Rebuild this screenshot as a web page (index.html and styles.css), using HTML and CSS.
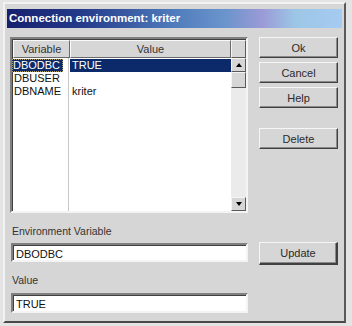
FILE: index.html
```html
<html lang="en">
<head>
    <meta charset="UTF-8">
    <title>Connection environment</title>
    <link rel="stylesheet" href="styles.css">
</head>
<body>
    <div class="dialog">

        <div class="titlebar">Connection environment: kriter</div>

        <div class="body">
            <div class="top">
                <div class="list">
                    <div class="list-main">
                        <div class="header">
                            <div class="col-var">Variable</div>
                            <div class="col-val">Value</div>
                        </div>
                        <div class="rows">
                            <div class="sep"></div>
                            <div class="row selected">
                                <div class="col-var"><span>DBODBC</span></div>
                                <div class="col-val"><span>TRUE</span></div>
                            </div>
                            <div class="row">
                                <div class="col-var">DBUSER</div>
                                <div class="col-val"></div>
                            </div>
                            <div class="row">
                                <div class="col-var">DBNAME</div>
                                <div class="col-val">kriter</div>
                            </div>
                        </div>
                    </div>
                    <div class="scrollbar">
                        <div class="corner"></div>
                        <div class="arrow up"><span></span></div>
                        <div class="thumb"></div>
                        <div class="track"></div>
                        <div class="arrow down"><span></span></div>
                    </div>
                </div>

                <div class="buttons">
                    <button>Ok</button>
                    <button>Cancel</button>
                    <button>Help</button>
                    <button class="delete">Delete</button>
                </div>
            </div>

            <div class="fields">
                <div class="label">Environment Variable</div>
                <div></div>
                <div class="input">DBODBC</div>
                <button class="default">Update</button>
                <div class="label second">Value</div>
                <div></div>
                <div class="input tall">TRUE</div>
            </div>
        </div>

    </div>
</body>
</html>
```

FILE: styles.css
```css
* {
    box-sizing: border-box;
    font-family: "Liberation Sans", Arial, sans-serif;
}

body {
    margin: 0;
    background: #e4e4e4;
}

.dialog {
    margin: 2px 6px 0 3px;
    width: 343px;
    height: 321px;
    background: #d6d6d6;
    border: 2px solid;
    border-color: #f2f2f2 #5a5a5a #4a4a4a #f2f2f2;
}

.titlebar {
    margin: 5px 2px 0 2px;
    height: 19px;
    padding: 3px 0 0 2px;
    color: white;
    font-weight: bold;
    font-size: 11.5px;
    background: linear-gradient(to right, #16206e 0%, #243a8a 22%, #4f7cbc 50%, #6a94cc 65%, #9a9ad6 76%, #9cc6e6 86%, #a6cbf2 100%);
}

.body {
    padding: 9px 6px 0 5px;
}

.top {
    display: flex;
    gap: 11px;
}

.list {
    display: flex;
    width: 238px;
    height: 176px;
    background: white;
    border: 2px solid;
    border-color: #808080 #f4f4f4 #f4f4f4 #808080;
    box-shadow: inset 1px 1px 0 #404040;
}

.list-main {
    flex: 1;
    display: flex;
    flex-direction: column;
    font-size: 11px;
}

.header {
    display: flex;
    height: 18px;
    margin: 1px 0 0 1px;
    background: #d6d6d6;
    color: #333;
}

.header div {
    text-align: center;
    padding-top: 2px;
    border: 1px solid;
    border-color: #fafafa #6a6a6a #6a6a6a #fafafa;
}

.col-var {
    width: 57px;
}

.col-val {
    flex: 1;
}

.rows {
    flex: 1;
    position: relative;
    padding-top: 1px;
}

.sep {
    position: absolute;
    left: 56px;
    top: 0;
    bottom: 0;
    width: 1px;
    background: #c8c8c8;
}

.row {
    display: flex;
    height: 13px;
    line-height: 13px;
    color: #111;
}

.row .col-var {
    padding-left: 2px;
}

.row .col-val {
    padding-left: 3px;
}

.row.selected .col-var,
.row.selected .col-val {
    padding-left: 0;
}

.selected .col-var span {
    display: inline-block;
    width: 51px;
    padding-left: 1px;
    background: #0c2a6a;
    color: white;
    outline: 1px dotted #b0a070;
    outline-offset: -1px;
}

.selected .col-val span {
    display: block;
    margin-left: 1px;
    padding-left: 2px;
    background: #0c2a6a;
    color: white;
}

.scrollbar {
    width: 15px;
    display: flex;
    flex-direction: column;
    margin-top: 1px;
}

.corner,
.arrow,
.thumb {
    background: #d6d6d6;
    border: 1px solid;
    border-color: #f4f4f4 #5a5a5a #5a5a5a #f4f4f4;
}

.corner {
    height: 18px;
}

.arrow {
    height: 14px;
    display: flex;
    align-items: center;
    justify-content: center;
}

.arrow span {
    width: 0;
    height: 0;
    border-left: 3px solid transparent;
    border-right: 3px solid transparent;
}

.up span {
    border-bottom: 4px solid black;
}

.down span {
    border-top: 4px solid black;
}

.thumb {
    height: 16px;
}

.track {
    flex: 1;
    background: #ebebeb;
}

.buttons {
    width: 79px;
    display: flex;
    flex-direction: column;
    gap: 4px;
}

button {
    height: 21px;
    padding: 0;
    font-size: 11px;
    color: #2a2a2a;
    background: #d6d6d6;
    border: 1px solid;
    border-color: #f6f6f6 #404040 #404040 #f6f6f6;
    box-shadow: inset -1px -1px 0 #8a8a8a;
}

.delete {
    margin-top: 16px;
}

.default {
    height: 23px;
    margin-top: -1px;
    border-right-width: 2px;
    border-bottom-width: 2px;
}

.fields {
    display: grid;
    grid-template-columns: 238px 79px;
    column-gap: 11px;
    margin-top: 12px;
}

.label {
    height: 13px;
    padding-left: 2px;
    font-size: 10.5px;
    color: #333;
    margin-bottom: 5px;
}

.label.second {
    margin-top: 9px;
    margin-bottom: 6px;
}

.input {
    height: 19px;
    margin-left: 1px;
    padding: 3px 0 0 3px;
    font-size: 11px;
    color: #111;
    background: white;
    border: 2px solid;
    border-color: #808080 #f4f4f4 #f4f4f4 #808080;
    box-shadow: inset 1px 1px 0 #404040;
}

.input.tall {
    height: 20px;
}
```
